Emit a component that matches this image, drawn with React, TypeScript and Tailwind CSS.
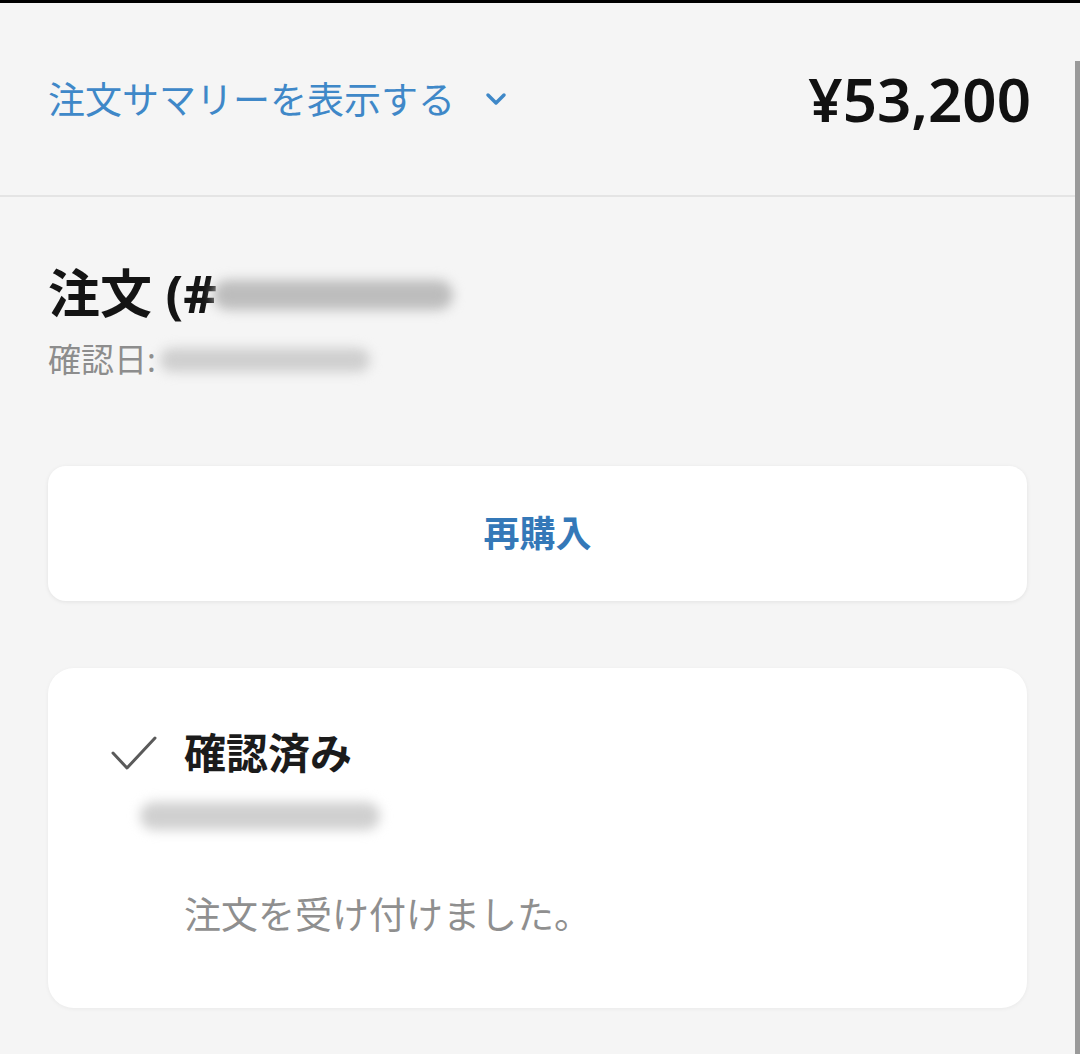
import React from 'react';

const jp = "font-['Noto_Sans','Noto_Sans_CJK_JP',sans-serif]";

function Redacted({ className }: { className: string }) {
  return <div className={`rounded-full bg-[#bdbdbd] blur-[6px] ${className}`} />;
}

export default function App() {
  return (
    <div className={`w-[1080px] h-[1054px] flex bg-[#f5f5f5] border-t-[3px] border-black overflow-hidden ${jp}`}>
      <div className="flex-1 flex flex-col">
        <header className="h-[194px] flex items-center justify-between pl-[48px] pr-[44px] border-b-2 border-[#e4e4e4]">
          <button className="flex items-center gap-[30px] text-[#3f88c8] text-[37px] leading-none">
            <span>注文サマリーを表示する</span>
            <svg width="22" height="14" viewBox="0 0 22 14" fill="none">
              <path d="M3 3l8 8 8-8" stroke="#3f88c8" strokeWidth="3.5" strokeLinecap="round" strokeLinejoin="round" />
            </svg>
          </button>
          <div className="text-[60px] font-semibold text-[#111] leading-none">¥53,200</div>
        </header>

        <div className="px-[48px] pt-[70px] flex flex-col">
          <div className="flex items-center">
            <h1 className="text-[52px] font-bold text-[#141414] leading-none whitespace-nowrap">注文 (#</h1>
            <Redacted className="w-[240px] h-[30px] ml-[-4px] mt-[4px] bg-[#a9a9a9]" />
          </div>
          <div className="flex items-center mt-[24px]">
            <span className="text-[33px] text-[#8d8d8d] leading-none">確認日:</span>
            <Redacted className="w-[210px] h-[24px] ml-[4px] bg-[#cfcfcf]" />
          </div>

          <button className="mt-[90px] h-[135px] w-full bg-white rounded-[18px] shadow-[0_1px_4px_rgba(0,0,0,0.08)] flex items-center justify-center text-[36px] font-bold text-[#3478b8]">
            再購入
          </button>

          <section className="mt-[67px] h-[340px] bg-white rounded-[26px] shadow-[0_1px_4px_rgba(0,0,0,0.05)] pt-[64px] pl-[62px]">
            <div className="flex items-center gap-[26px]">
              <svg width="48" height="36" viewBox="0 0 48 36" fill="none">
                <path d="M3 18l14 15L45 3" stroke="#5a5a5a" strokeWidth="3" strokeLinecap="round" strokeLinejoin="round" />
              </svg>
              <span className="text-[42px] font-bold text-[#1b1b1b] leading-none">確認済み</span>
            </div>
            <Redacted className="w-[240px] h-[28px] mt-[28px] ml-[30px] bg-[#d0d0d0]" />
            <p className="mt-[66px] ml-[74px] text-[37px] text-[#8f8f8f] leading-none">注文を受け付けました。</p>
          </section>
        </div>
      </div>
      <div className="w-[5px] mt-[58px] bg-[#9a9a9a]" />
    </div>
  );
}
